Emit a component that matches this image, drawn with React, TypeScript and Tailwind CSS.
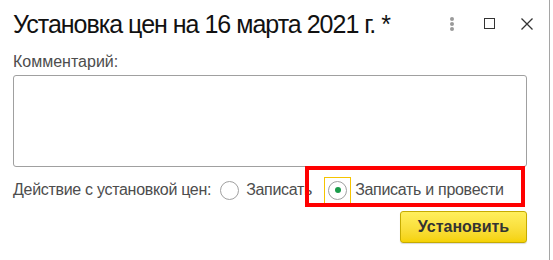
export default function App() {
  return (
    <div className="relative w-[553px] h-[260px] bg-white overflow-hidden" style={{ fontFamily: '"Liberation Sans", Arial, sans-serif' }}>
      <div className="w-[550px] h-full border-r border-[#a5a5a5] pl-[13px] pr-[16px]">
        {/* Header */}
        <div className="flex items-center h-[46px]">
          <h1 className="flex-1 text-[25px] leading-none tracking-[-1px] text-[#111] pt-[2px]">Установка цен на 16 марта 2021 г. *</h1>
          <div className="flex flex-col items-center gap-[1px] w-[4px] mr-[30px] pt-[1px]">
            <span className="w-[4px] h-[4px] rounded-full bg-[#9a9a9a]" />
            <span className="w-[4px] h-[4px] rounded-full bg-[#9a9a9a]" />
            <span className="w-[4px] h-[4px] rounded-full bg-[#9a9a9a]" />
          </div>
          <span className="w-[11px] h-[11px] border-[1.5px] border-[#333] mr-[26px] mt-[1px]" />
          <svg width="12" height="12" viewBox="0 0 12 12" className="mt-[1px]">
            <path d="M0.5 0.5 11.5 11.5 M11.5 0.5 0.5 11.5" stroke="#333" strokeWidth="1.3" fill="none" />
          </svg>
        </div>

        {/* Comment */}
        <div className="text-[16px] leading-none text-[#4d4d4d] mt-[8px]">Комментарий:</div>
        <div className="mt-[5px] w-[514px] h-[92px] border border-[#a0a0a0] rounded-[3px]" />

        {/* Action */}
        <div className="flex items-center mt-[10px] h-[26px] text-[16px] tracking-[-0.3px] text-[#4d4d4d]">
          <span>Действие с установкой цен:</span>
          <span className="ml-[9px] w-[19px] h-[19px] rounded-full border border-[#a0a0a0]" />
          <span className="ml-[7px]">Записать</span>
          <span className="ml-[12px] w-[27px] h-[27px] border border-[#f5c400] flex items-center justify-center">
            <span className="w-[19px] h-[19px] rounded-full border border-[#a0a0a0] flex items-center justify-center">
              <span className="w-[6px] h-[6px] rounded-full bg-[#1a9c4a]" />
            </span>
          </span>
          <span className="ml-[4px]">Записать и провести</span>
        </div>

        <div className="flex justify-end mt-[8px] w-[514px]">
          <button className="w-[127px] h-[32px] rounded-[3px] border border-[#c6ab00] bg-gradient-to-b from-[#ffef5c] to-[#f5d200] text-[16px] font-bold text-[#333] shadow-[0_1px_1px_rgba(0,0,0,0.15)]">
            Установить
          </button>
        </div>
      </div>

      {/* Red annotation box */}
      <div className="absolute left-[305px] top-[166px] w-[220px] h-[41px] border-[4px] border-[#ff0000]" />
    </div>
  )
}
